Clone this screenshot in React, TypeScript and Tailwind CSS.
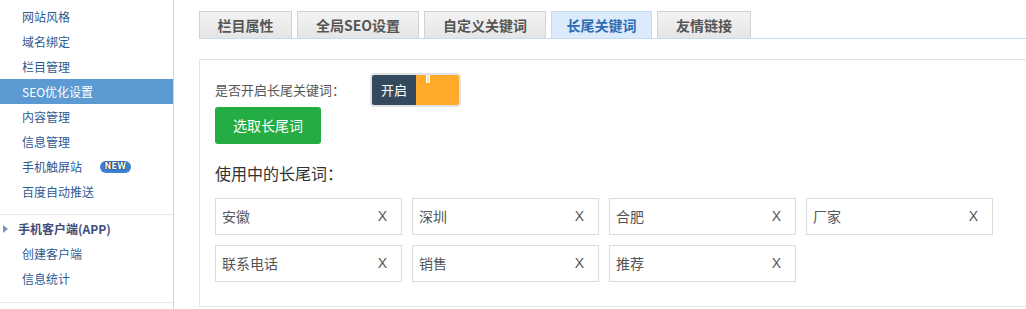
import React from "react";

const font = { fontFamily: '"Noto Sans CJK SC", "Liberation Sans", sans-serif' };

const sideTop = ["网站风格", "域名绑定", "栏目管理", "SEO优化设置", "内容管理", "信息管理", "手机触屏站", "百度自动推送"];
const tabs = [
  { t: "栏目属性", w: "w-[93px]" },
  { t: "全局SEO设置", w: "w-[122px]" },
  { t: "自定义关键词", w: "w-[122px]" },
  { t: "长尾关键词", w: "w-[101px]", active: true },
  { t: "友情链接", w: "w-[94px]" },
];
const words = ["安徽", "深圳", "合肥", "厂家", "联系电话", "销售", "推荐"];

export default function App() {
  return (
    <div className="flex w-[1026px] h-[309px] bg-white overflow-hidden" style={font}>
      <div className="w-[174px] shrink-0 border-r border-[#c3d7ea] h-full pt-[4px]">
        {sideTop.map((s, i) => (
          <div
            key={s}
            className={`h-[25px] flex items-center pl-[22px] text-[12px] ${i === 3 ? "bg-[#5b9ad3] text-white" : "text-[#2c5a94]"}`}
          >
            {s}
            {s === "手机触屏站" && (
              <span
                className="ml-[18px] h-[12px] w-[31px] rounded-full bg-[#3d7fd0] text-white text-[8px] font-black leading-[12px] text-center tracking-[0.3px]"
                style={{ fontFamily: '"DejaVu Sans", sans-serif', textShadow: "0 0 1px #000, 0 0 1px #000" }}
              >
                NEW
              </span>
            )}
          </div>
        ))}
        <div className="mt-[10px] border-t border-[#dde8f1] pt-[1px]">
          <div className="h-[25px] flex items-center text-[12px] font-bold text-[#3f4d7a]">
            <span className="ml-[3px] mr-[10px] w-0 h-0 border-y-[4px] border-y-transparent border-l-[5px] border-l-[#7b95b8]" />
            手机客户端(APP)
          </div>
          <div className="h-[25px] flex items-center pl-[22px] text-[12px] text-[#2c5a94]">创建客户端</div>
          <div className="h-[25px] flex items-center pl-[22px] text-[12px] text-[#2c5a94]">信息统计</div>
        </div>
        <div className="mt-[11px] border-t border-[#dde8f1]" />
      </div>
      <div className="flex-1 pl-[25px] pt-[11px]">
        <div className="flex gap-[5px] border-b border-[#c4daf0]">
          {tabs.map((t) => (
            <div
              key={t.t}
              className={`${t.w} h-[27px] flex items-center justify-center text-[14px] font-bold border border-b-0 ${
                t.active ? "bg-[#dcebfb] text-[#2d6db5] border-[#c4daf0]" : "bg-gradient-to-b from-[#f3f3f3] to-[#e5e5e5] text-[#555] border-[#d2d2d2]"
              }`}
            >
              {t.t}
            </div>
          ))}
        </div>
        <div className="mt-[20px] h-[248px] border border-r-0 border-[#e4e4e4] pl-[15px] pt-[13px]">
          <div className="flex items-center h-[34px]">
            <span className="text-[13px] text-[#555] w-[155px]">是否开启长尾关键词：</span>
            <div className="w-[91px] h-[34px] border-2 border-[#e3e3e3] rounded-[4px] flex overflow-hidden">
              <div className="w-[44px] bg-[#34495e] text-white text-[13px] flex items-center justify-center">开启</div>
              <div className="flex-1 bg-[#ffaa2b] relative">
                <div className="absolute left-[10px] top-0 w-[4px] h-[8px] border-x border-white bg-[#ffe0b0]" />
              </div>
            </div>
          </div>
          <button className="mt-0 w-[106px] h-[37px] rounded-[3px] bg-[#23ad44] text-white text-[14px]">选取长尾词</button>
          <div className="mt-[17px] text-[16px] text-[#333] leading-[24px]">使用中的长尾词：</div>
          <div className="mt-[13px] grid grid-cols-[repeat(4,187px)] gap-x-[10px] gap-y-[10px]">
            {words.map((w) => (
              <div key={w} className="h-[37px] border border-[#dcdcdc] flex items-center justify-between pl-[6px] pr-[14px] text-[14px] text-[#555]">
                <span>{w}</span>
                <span style={{ fontFamily: '"Liberation Sans", sans-serif' }} className="text-[#555] text-[14px]">X</span>
              </div>
            ))}
          </div>
        </div>
      </div>
    </div>
  );
}
